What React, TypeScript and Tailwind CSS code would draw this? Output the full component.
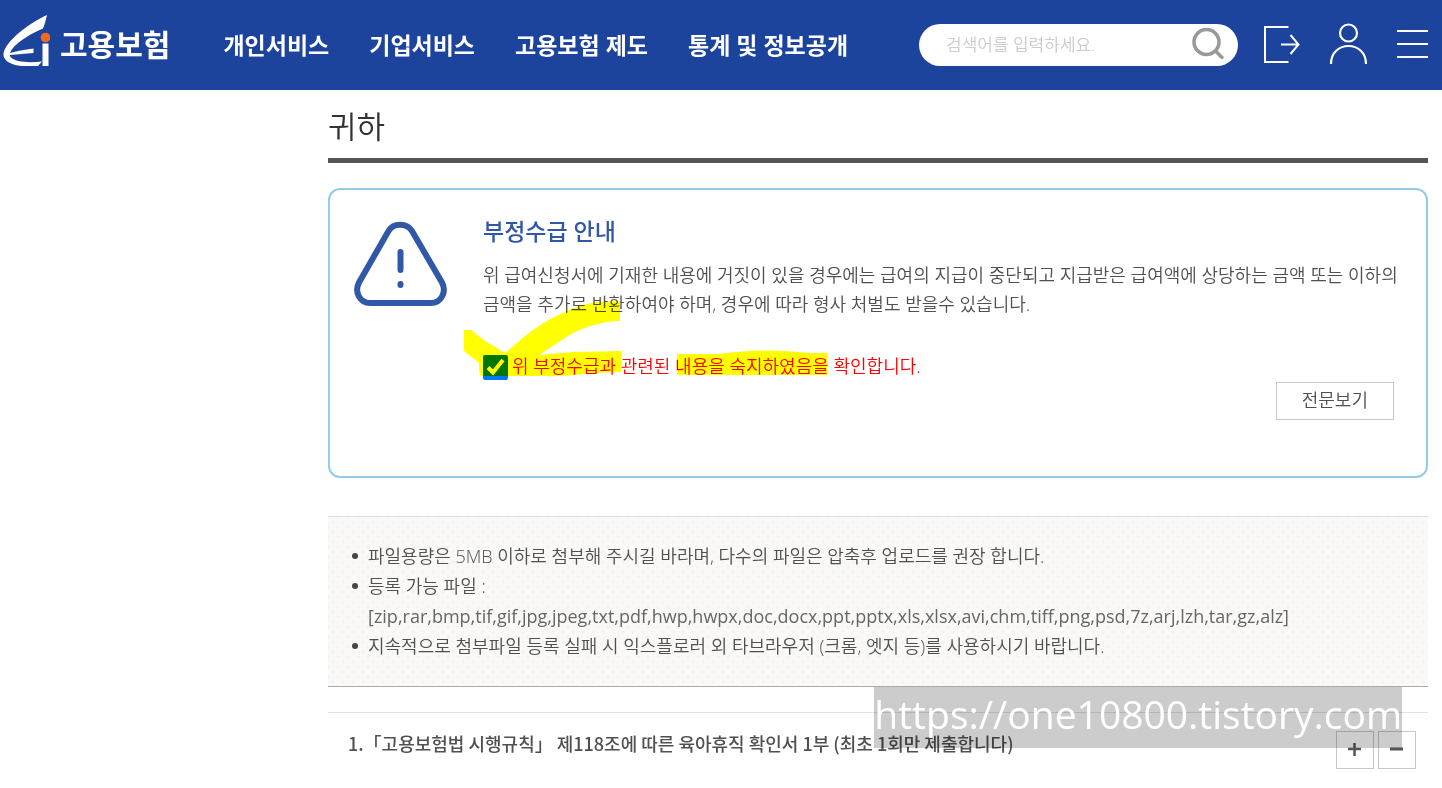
import type { ReactNode } from "react";

const menu = ["개인서비스", "기업서비스", "고용보험 제도", "통계 및 정보공개"];

const notices: ReactNode[] = [
  "파일용량은 5MB 이하로 첨부해 주시길 바라며, 다수의 파일은 압축후 업로드를 권장 합니다.",
  <>
    등록 가능 파일 :
    <br />
    <span className="font-normal text-[#666]">
      [zip,rar,bmp,tif,gif,jpg,jpeg,txt,pdf,hwp,hwpx,doc,docx,ppt,pptx,xls,xlsx,avi,chm,tiff,png,psd,7z,arj,lzh,tar,gz,alz]
    </span>
  </>,
  "지속적으로 첨부파일 등록 실패 시 익스플로러 외 타브라우저 (크롬, 엣지 등)를 사용하시기 바랍니다.",
];

function Logo() {
  return (
    <a href="#" className="flex items-center pb-2 text-white">
      <svg width="48" height="54" viewBox="0 0 48 54" aria-hidden="true">
        <path
          fill="#fff"
          d="M45 1 C28 9 9 23 3 35 C-1 43 3 48 13 51 C19 52.5 30 52 36 52 L40 47.500 C26 49 13 48 8.500 43 C5 37 17 25 41 14.500 C43 10 44 5 45 1 Z"
        />
        <path fill="#fff" d="M8 39 C16 37 25 35 31.500 34.500 L31.500 39 L8 41 Z" />
        <path fill="#fff" d="M40.500 29.500 H46.500 V52 H40.500 Z" />
        <circle cx="43.500" cy="23.500" r="4.800" fill="#f26a21" />
      </svg>
      <span className="ml-2.5 pt-2 text-3xl leading-9 font-bold">고용보험</span>
    </a>
  );
}

function Header() {
  return (
    <header className="flex h-[90px] items-center justify-between bg-[#1c449c] pr-3.5 pl-0.5">
      <div className="flex items-center">
        <Logo />
        <nav className="ml-[53px] flex gap-10">
          {menu.map((label) => (
            <a
              key={label}
              href="#"
              className="text-[23px] leading-8 font-bold whitespace-nowrap text-white"
            >
              {label}
            </a>
          ))}
        </nav>
      </div>
      <div className="flex items-center">
        <form className="flex h-[42px] w-[319px] items-center rounded-full bg-white pr-3 pl-[27px]">
          <input
            type="text"
            aria-label="검색어"
            placeholder="검색어를 입력하세요."
            className="min-w-0 flex-1 text-[17px] font-[350] outline-none placeholder:text-[#c8cdd2]"
          />
          <button type="button" aria-label="검색" className="pb-1">
            <svg width="34" height="32" viewBox="0 0 34 32" fill="none" stroke="#999" aria-hidden="true">
              <circle cx="14.500" cy="15" r="12.500" strokeWidth="3.600" />
              <path d="M23 23.500 L31 31.500" strokeWidth="3.600" />
            </svg>
          </button>
        </form>
        <button type="button" aria-label="로그아웃" className="ml-6">
          <svg width="38" height="40" viewBox="0 0 38 40" fill="none" stroke="#fff" strokeWidth="2" aria-hidden="true">
            <path d="M26.500 2 H3 V37 H26.500" />
            <path d="M19 19.500 H36 M28.500 10 L36.500 19.500 L28.500 29" />
          </svg>
        </button>
        <button type="button" aria-label="내 정보" className="ml-7 pb-0.5">
          <svg width="40" height="42" viewBox="0 0 40 42" fill="none" stroke="#fff" strokeWidth="2.200" aria-hidden="true">
            <circle cx="20.500" cy="10" r="8.500" />
            <path d="M3 41 C3 17 38 17 38 41" />
          </svg>
        </button>
        <button type="button" aria-label="전체메뉴" className="ml-7 pb-0.5">
          <svg width="32" height="30" viewBox="0 0 32 30" stroke="#fff" strokeWidth="2.200" aria-hidden="true">
            <path d="M1 2 H32 M1 15 H32 M1 28 H32" />
          </svg>
        </button>
      </div>
    </header>
  );
}

// Marker strokes over the confirmation line
function Highlight() {
  return (
    <svg
      className="pointer-events-none absolute -top-[54px] -left-5 mix-blend-multiply"
      width="366"
      height="80"
      viewBox="0 0 366 80"
      fill="#ff0"
      aria-hidden="true"
    >
      <path d="M1 29 H8 L22 40 L42 52 L62 35 C85 17 112 4 135 1 L157 0 V20 C140 20 120 26 105 35 L76 54 L110 51 L158 50 V71 C130 71 110 75 90 75 H18 C16 72 16 67 16 62 L1 50 Z" />
      <path d="M214 53 H256 C290 48 320 49 345 52 H364 V74 H214 Z" />
    </svg>
  );
}

function FraudNotice() {
  return (
    <section className="mt-[25px] flex rounded-xl border-2 border-[#96cae6] pt-[25px] pr-7 pb-14 pl-6">
      <svg
        className="mt-1.5 shrink-0"
        width="94"
        height="86"
        viewBox="0 0 94 86"
        fill="none"
        stroke="#3158a8"
        strokeWidth="6"
        strokeLinecap="round"
        strokeLinejoin="round"
        aria-hidden="true"
      >
        <path d="M34.500 10 C39 1.500 53 1.500 58 10 L88 61.500 C93 71 87 82 77 82 H16 C6 82 0 71 5 61.500 Z" />
        <path d="M46.500 31 V49 M46.500 63 V64" />
      </svg>
      <div className="ml-[35px] min-w-0 flex-1">
        <h2 className="text-[23px] leading-8 font-medium text-[#3158a8]">부정수급 안내</h2>
        <p className="mt-3.5 text-lg leading-[29px]">
          위 급여신청서에 기재한 내용에 거짓이 있을 경우에는 급여의 지급이 중단되고 지급받은 급여액에 상당하는 금액 또는 이하의
          금액을 추가로 반환하여야 하며, 경우에 따라 형사 처벌도 받을수 있습니다.
        </p>
        <div className="relative mt-9 flex items-start">
          <input
            id="confirm"
            type="checkbox"
            defaultChecked
            className="size-[25px] shrink-0 accent-[#0075ff]"
          />
          <label htmlFor="confirm" className="ml-1 text-lg leading-[22px] text-[#f00]">
            위 부정수급과 관련된 내용을 숙지하였음을 확인합니다.
          </label>
          <Highlight />
        </div>
        <div className="mt-0.5 mr-1 flex justify-end">
          <button type="button" className="h-[38px] border border-[#c8c8c8] px-[25px] pb-0.5 text-lg leading-6">
            전문보기
          </button>
        </div>
      </div>
    </section>
  );
}

function UploadGuide() {
  return (
    <ul className="mt-[38px] border-t border-b border-t-[#ddd] border-b-[#aaa] bg-[#faf9f8] bg-[radial-gradient(circle,#f3f3f1_1px,transparent_2px),radial-gradient(circle,#f3f3f1_1px,transparent_2px)] bg-size-[10px_10px] bg-position-[0_0,5px_5px] px-6 pt-6 pb-[25px] text-lg leading-[30px]">
      {notices.map((notice, i) => (
        <li key={i} className="flex">
          <span className="mt-3 mr-2.5 size-1.5 shrink-0 rounded-full bg-[#444]" />
          <span className="min-w-0">{notice}</span>
        </li>
      ))}
    </ul>
  );
}

function AttachmentRow() {
  return (
    <section className="relative mt-[25px] flex items-start justify-between border-t border-[#e2e2e2] pt-[18px] pr-3 pl-5">
      <h3 className="font-['Noto_Sans_CJK_KR',sans-serif] text-lg leading-6 font-medium">
        1.「고용보험법 시행규칙」 제118조에 따른 육아휴직 확인서 1부 (최초 1회만 제출합니다)
      </h3>
      <div className="flex gap-1">
        <button type="button" aria-label="추가" className="flex size-[38px] items-center justify-center border border-[#c8c8c8]">
          <svg width="14" height="14" viewBox="0 0 14 14" stroke="#555" strokeWidth="2.500" aria-hidden="true">
            <path d="M0 6 H13 M6.500 0 V13" />
          </svg>
        </button>
        <button type="button" aria-label="삭제" className="flex size-[38px] items-center justify-center border border-[#c8c8c8]">
          <svg width="14" height="14" viewBox="0 0 14 14" stroke="#555" strokeWidth="3" aria-hidden="true">
            <path d="M0 6 H13" />
          </svg>
        </button>
      </div>
      <div className="absolute -top-[26px] right-[26px] bg-black/20 pb-2 font-['Open_Sans','Noto_Sans',sans-serif] text-[39px] leading-[53px] font-normal text-white">
        https://one10800.tistory.com
      </div>
    </section>
  );
}

export default function App() {
  return (
    <div className="min-h-screen bg-white font-['Open_Sans','Noto_Sans_CJK_KR',sans-serif] font-[350] text-[#505050]">
      <Header />
      <main className="pr-3.5 pl-[328px]">
        <h1 className="border-b-[5px] border-[#555] pt-4 pb-3 text-[31px] leading-10 text-[#333]">귀하</h1>
        <FraudNotice />
        <UploadGuide />
        <AttachmentRow />
      </main>
    </div>
  );
}
